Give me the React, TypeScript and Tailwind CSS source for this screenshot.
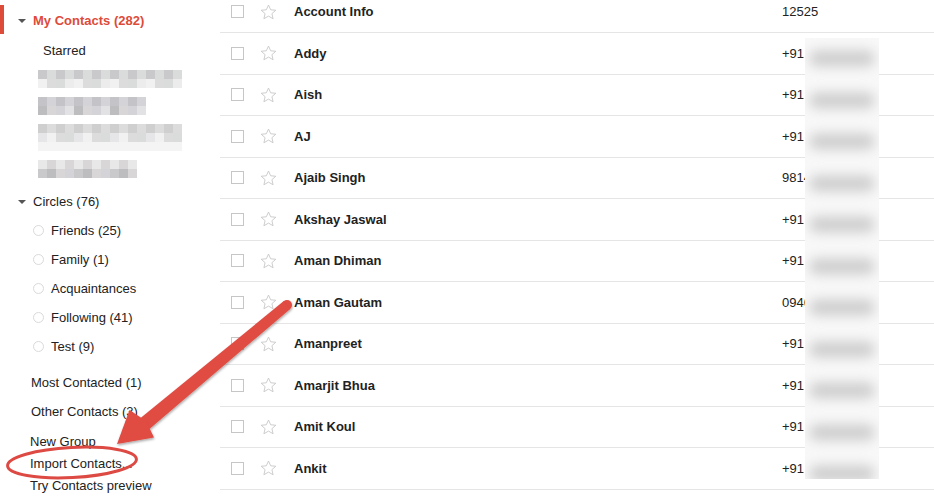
import React from "react";

const contacts = [
  { name: "Account Info", phone: "12525", blur: false },
  { name: "Addy", phone: "+91", blur: true },
  { name: "Aish", phone: "+91", blur: true },
  { name: "AJ", phone: "+91", blur: true },
  { name: "Ajaib Singh", phone: "9814", blur: true },
  { name: "Akshay Jaswal", phone: "+91", blur: true },
  { name: "Aman Dhiman", phone: "+91", blur: true },
  { name: "Aman Gautam", phone: "0946", blur: true },
  { name: "Amanpreet", phone: "+91", blur: true },
  { name: "Amarjit Bhua", phone: "+91", blur: true },
  { name: "Amit Koul", phone: "+91", blur: true, tail: "6" },
  { name: "Ankit", phone: "+91", blur: true },
];

const circles = ["Friends (25)", "Family (1)", "Acquaintances", "Following (41)", "Test (9)"];

// pixelated (redacted) group names
const mosaics = [
  { cols: 16, rows: 2, mt: "mt-[4px]" },
  { cols: 12, rows: 2, mt: "mt-[9px]" },
  { cols: 16, rows: 3, mt: "mt-[9px]" },
  { cols: 11, rows: 2, mt: "mt-[9px]" },
];

const shades = [
  "#e6e6e8", "#d2d2d4", "#dcdcdc", "#c9c9cc", "#ececec", "#d8d6d6", "#c4c4c8",
  "#e2e2e4", "#f1f1f1", "#cfcfcf", "#dadcdc", "#bdbdc0", "#e9e8e8", "#d4d4d8",
];

function Mosaic({ cols, rows, seed }: { cols: number; rows: number; seed: number }) {
  const cells = [];
  for (let r = 0; r < rows; r++) {
    for (let c = 0; c < cols; c++) {
      const i = (c * 7 + r * 5 + seed * 3 + ((c * r) % 4)) % shades.length;
      const faint = r === rows - 1 && rows > 2;
      cells.push(
        <div
          key={r + "-" + c}
          className="h-[9px] w-[9px]"
          style={{ backgroundColor: faint ? "#f4f4f4" : shades[i] }}
        />
      );
    }
  }
  return (
    <div className="grid w-fit" style={{ gridTemplateColumns: `repeat(${cols}, 9px)` }}>
      {cells}
    </div>
  );
}

function Caret() {
  return <span className="mr-[7px] inline-block h-0 w-0 border-x-[4px] border-t-[4px] border-x-transparent border-t-[#555]" />;
}

function Star() {
  return (
    <svg width="17" height="16" viewBox="0 0 24 23" fill="none">
      <path
        d="M12 1.5l3.1 6.8 7.4.7-5.6 4.9 1.7 7.3L12 17.4l-6.6 3.8 1.7-7.3L1.5 9l7.4-.7L12 1.5z"
        stroke="#c8c8c8"
        strokeWidth="1.3"
        strokeLinejoin="round"
      />
    </svg>
  );
}

function Sidebar() {
  return (
    <div className="flex w-[220px] shrink-0 flex-col text-[13px] text-[#222]">
      <div className="mt-[5px] flex h-[30px] items-center border-l-4 border-[#dd4b39] pl-[14px] pt-[3px] font-bold text-[#dd4b39]">
        <Caret />
        My Contacts (282)
      </div>
      <div className="flex h-[32px] items-center pl-[43px] pt-[2px]">Starred</div>
      {mosaics.map((m, i) => (
        <div key={i} className={"pl-[38px] " + m.mt}>
          <Mosaic cols={m.cols} rows={m.rows} seed={i + 1} />
        </div>
      ))}
      <div className="mt-[10px] flex h-[29px] items-center pl-[18px]">
        <Caret />
        Circles (76)
      </div>
      <div className="flex flex-col">
        {circles.map((c) => (
          <div key={c} className="flex h-[29px] items-center pl-[33px]">
            <span className="mr-[7px] h-[11px] w-[11px] rounded-full border-[1.5px] border-[#dadada]" />
            {c}
          </div>
        ))}
      </div>
      <div className="mt-[8px] flex h-[29px] items-center pl-[31px]">Most Contacted (1)</div>
      <div className="flex h-[29px] items-center pl-[31px] pt-[1px]">Other Contacts (3)</div>
      <div className="mt-[4px] flex h-[23px] items-center pl-[30px] pt-[1px]">New Group</div>
      <div className="flex h-[23px] items-center pl-[30px] pt-[1px]">Import Contacts...</div>
      <div className="flex h-[22px] items-center pl-[30px] pt-[2px]">Try Contacts preview</div>
    </div>
  );
}

function ContactList() {
  return (
    <div className="relative flex-1">
      <div className="mt-[-8.5px] flex flex-col">
        {contacts.map((c) => (
          <div
            key={c.name}
            className="flex h-[41.5px] shrink-0 items-center border-b border-[#e5e5e5] text-[13px] text-[#222]"
          >
            <span className="ml-[11px] h-[13px] w-[13px] border border-[#c6c6c6]" />
            <span className="ml-[16px] flex items-center">
              <Star />
            </span>
            <span className="ml-[17px] w-[488px] font-bold">{c.name}</span>
            <span className="flex">
              {c.phone}
              {c.tail ? <span className="ml-[60px]">{c.tail}</span> : null}
            </span>
          </div>
        ))}
      </div>
      {/* redaction over the phone numbers */}
      <div className="absolute left-[585px] top-[38px] flex h-[441px] w-[74px] flex-col overflow-hidden bg-[#f8f8f8]">
        {contacts.slice(1).map((c, i) => (
          <div key={i} className="flex h-[41.5px] shrink-0 items-center justify-center">
            <div className="h-[17px] w-[66px] rounded-full bg-[#d0d0d0] blur-[6px]" />
          </div>
        ))}
      </div>
    </div>
  );
}

function Annotations() {
  return (
    <svg className="pointer-events-none absolute left-0 top-0" width="934" height="496" viewBox="0 0 934 496">
      <defs>
        <filter id="sh" x="-20%" y="-20%" width="140%" height="140%">
          <feDropShadow dx="0.5" dy="1.5" stdDeviation="1.2" floodColor="#000" floodOpacity="0.35" />
        </filter>
      </defs>
      <g filter="url(#sh)" fill="#e04b43">
        <circle cx="287" cy="305" r="5" />
        <polygon points="283.8,301.1 290.2,308.9 146.5,431.6 137.5,420.6" />
        <polygon points="117,444 129.5,410 146,421 154,437.5" />
      </g>
      <ellipse
        cx="72"
        cy="462.5"
        rx="64.5"
        ry="15"
        transform="rotate(-3 72 462.5)"
        fill="none"
        stroke="#dd4a44"
        strokeWidth="3"
      />
    </svg>
  );
}

export default function App() {
  return (
    <div
      className="relative flex h-[496px] w-[934px] overflow-hidden bg-white"
      style={{ fontFamily: '"Liberation Sans", Arial, sans-serif' }}
    >
      <Sidebar />
      <ContactList />
      <Annotations />
    </div>
  );
}
